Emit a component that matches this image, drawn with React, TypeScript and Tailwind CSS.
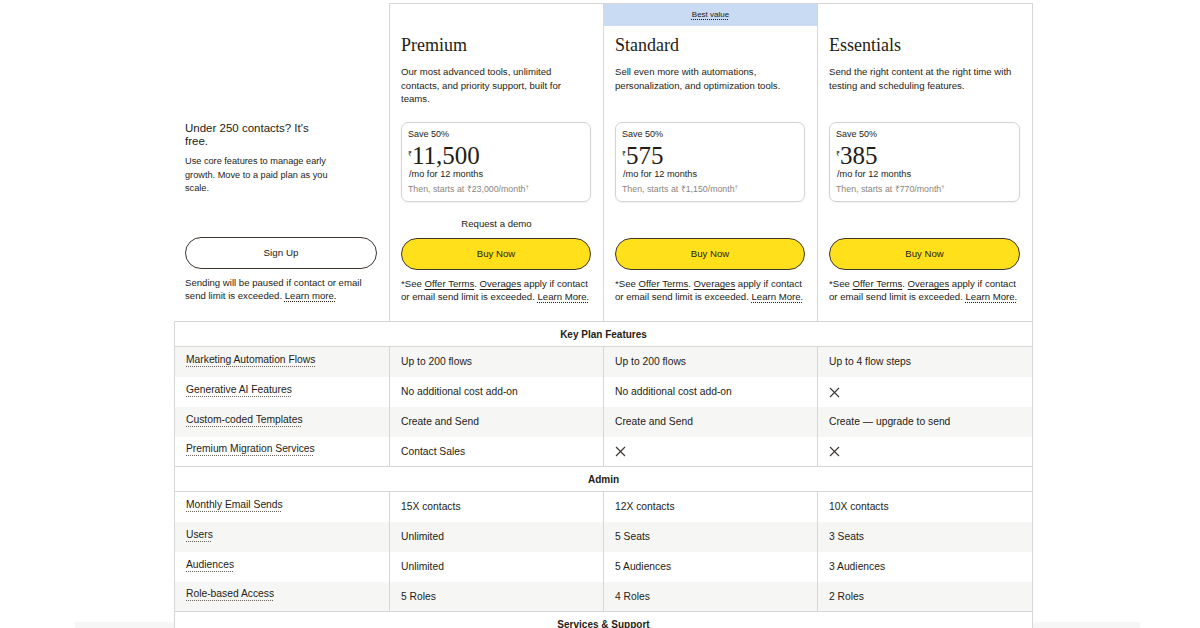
import React from "react";

type Plan = {
  name: string;
  desc: string;
  price: string;
  then: string;
  demo?: boolean;
  best?: boolean;
};

const plans: Plan[] = [
  {
    name: "Premium",
    desc: "Our most advanced tools, unlimited contacts, and priority support, built for teams.",
    price: "11,500",
    then: "₹23,000/month",
    demo: true,
  },
  {
    name: "Standard",
    desc: "Sell even more with automations, personalization, and optimization tools.",
    price: "575",
    then: "₹1,150/month",
    best: true,
  },
  {
    name: "Essentials",
    desc: "Send the right content at the right time with testing and scheduling features.",
    price: "385",
    then: "₹770/month",
  },
];

type Row = { label: string; values: (string | null)[]; gray?: boolean };

const sections: { title: string; rows: Row[] }[] = [
  {
    title: "Key Plan Features",
    rows: [
      { label: "Marketing Automation Flows", values: ["Up to 200 flows", "Up to 200 flows", "Up to 4 flow steps"], gray: true },
      { label: "Generative AI Features", values: ["No additional cost add-on", "No additional cost add-on", null] },
      { label: "Custom-coded Templates", values: ["Create and Send", "Create and Send", "Create — upgrade to send"], gray: true },
      { label: "Premium Migration Services", values: ["Contact Sales", null, null] },
    ],
  },
  {
    title: "Admin",
    rows: [
      { label: "Monthly Email Sends", values: ["15X contacts", "12X contacts", "10X contacts"] },
      { label: "Users", values: ["Unlimited", "5 Seats", "3 Seats"], gray: true },
      { label: "Audiences", values: ["Unlimited", "5 Audiences", "3 Audiences"] },
      { label: "Role-based Access", values: ["5 Roles", "4 Roles", "2 Roles"], gray: true },
    ],
  },
  { title: "Services & Support", rows: [] },
];

const CrossIcon = () => (
  <svg width="11" height="11" viewBox="0 0 11 11" fill="none" stroke="#3a3430" strokeWidth="1.1">
    <line x1="1" y1="1" x2="10" y2="10" />
    <line x1="10" y1="1" x2="1" y2="10" />
  </svg>
);

const Footnote = () => (
  <p className="text-[9.6px] leading-[13px]">
    *See <span className="underline underline-offset-2">Offer Terms</span>.{" "}
    <span className="underline underline-offset-2">Overages</span> apply if contact or email send limit is exceeded.{" "}
    <span className="underline decoration-dotted underline-offset-2">Learn More.</span>
  </p>
);

const PlanColumn = ({ plan, last }: { plan: Plan; last: boolean }) => (
  <div className={`flex flex-col border-l border-t border-[#d6d6d6] ${last ? "border-r" : ""}`}>
    {plan.best ? (
      <div className="h-[22px] bg-[#c9dbf2] flex items-center justify-center">
        <span className="text-[8px] underline decoration-dotted underline-offset-2">Best value</span>
      </div>
    ) : (
      <div className="h-[22px]" />
    )}
    <div className="px-[11px] flex flex-col">
      <h2 className="mt-[7px] h-[25px] text-[18px] leading-[24px] font-['Liberation_Serif',serif]">{plan.name}</h2>
      <p className="mt-[7px] h-[57px] text-[9.6px] leading-[13.5px]">{plan.desc}</p>
      <div className="h-[80px] mr-px rounded-[7px] border border-[#d3d3d3] shadow-[0_1px_2px_rgba(0,0,0,0.06)] px-[6px] pt-[5px]">
        <div className="text-[9px] leading-[12px]">Save 50%</div>
        <div className="mt-[4px] flex items-start h-[24px] font-['Liberation_Serif',serif]">
          <span className="text-[7px] leading-[10px] mt-[5px]">₹</span>
          <span className="text-[25px] leading-[24px]">{plan.price}</span>
        </div>
        <div className="text-[9.2px] leading-[12px] pl-[1px]">/mo for 12 months</div>
        <div className="mt-[3px] text-[8.8px] leading-[12px] text-[#8a8580]">
          Then, starts at {plan.then}
          <sup className="text-[6px]">†</sup>
        </div>
      </div>
      <div className="mt-[15px] h-[14px] text-center text-[9.6px] leading-[14px] font-medium">
        {plan.demo ? "Request a demo" : ""}
      </div>
      <button className="mt-[7px] h-[32px] mr-px rounded-full border border-[#3c3530] bg-[#ffe01b] text-[9.6px] font-medium">
        Buy Now
      </button>
      <div className="mt-[7px] pb-[18px]">
        <Footnote />
      </div>
    </div>
  </div>
);

export default function App() {
  return (
    <div className="relative min-h-[628px] bg-white text-[#241c15] font-['Liberation_Sans',Arial,sans-serif] overflow-hidden">
      <div className="absolute left-[75px] top-[622px] w-[1065px] h-[8px] bg-[#f6f6f6]" />
      <div className="relative w-[859px] ml-[174px] pt-[3px]">
        <div className="grid grid-cols-[215px_214px_214px_216px]">
          <div className="flex flex-col px-[11px]">
            <div className="h-[119px]" />
            <div className="h-[115px]">
              <h3 className="text-[11.5px] leading-[13px] font-medium w-[140px]">Under 250 contacts? It's free.</h3>
              <p className="mt-[7px] text-[9.2px] leading-[13.5px] w-[160px]">
                Use core features to manage early growth. Move to a paid plan as you scale.
              </p>
            </div>
            <button className="h-[32px] mr-px rounded-full border border-[#3c3530] bg-white text-[9.8px] font-medium">
              Sign Up
            </button>
            <p className="mt-[7px] text-[9.6px] leading-[13px]">
              Sending will be paused if contact or email send limit is exceeded.{" "}
              <span className="underline decoration-dotted underline-offset-2">Learn more.</span>
            </p>
          </div>
          {plans.map((p, i) => (
            <PlanColumn key={p.name} plan={p} last={i === plans.length - 1} />
          ))}
        </div>

        <div className="relative bg-white border-l border-r border-t border-[#d6d6d6]">
          {sections.map((s) => (
            <div key={s.title}>
              <div className="h-[25px] flex items-center justify-center border-b border-[#d6d6d6] text-[10px] font-semibold">
                {s.title}
              </div>
              {s.rows.map((r, ri) => (
                <div
                  key={r.label}
                  className={`grid grid-cols-[214px_214px_214px_215px] h-[30px] ${r.gray ? "bg-[#f6f6f5]" : "bg-white"} ${
                    ri === s.rows.length - 1 ? "border-b border-[#d6d6d6]" : ""
                  }`}
                >
                  <div className="flex items-center px-[11px] pb-[5px]">
                    <span className="text-[10.3px] underline decoration-dotted underline-offset-[3px] decoration-[#6b6560]">
                      {r.label}
                    </span>
                  </div>
                  {r.values.map((v, vi) => (
                    <div key={vi} className="flex items-center px-[11px] border-l border-[#d6d6d6] text-[10.3px]">
                      {v === null ? <CrossIcon /> : v}
                    </div>
                  ))}
                </div>
              ))}
            </div>
          ))}
        </div>
      </div>
    </div>
  );
}
